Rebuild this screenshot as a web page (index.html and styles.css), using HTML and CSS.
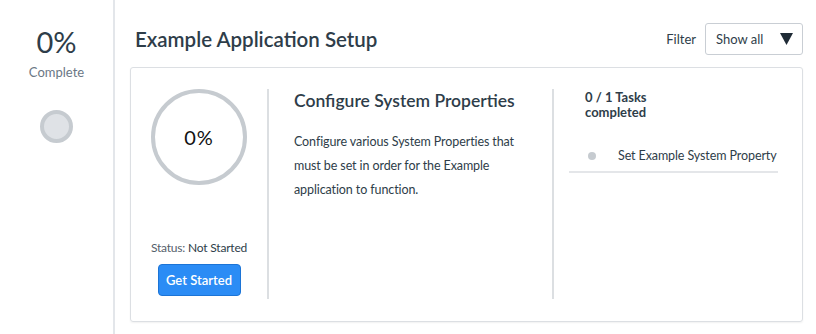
FILE: index.html
```html
<!DOCTYPE html>
<html>
<head>
<meta charset="utf-8">
<link rel="stylesheet" href="styles.css">
</head>
<body>
<div class="page">
  <aside class="sidebar">
    <div class="pct">0%</div>
    <div class="pct-label">Complete</div>
    <div class="dot-big"></div>
  </aside>
  <main class="main">
    <header class="top">
      <h1 class="title">Example Application Setup</h1>
      <div class="filter">
        <span class="filter-label">Filter</span>
        <div class="select"><span>Show all</span><svg class="caret" width="13" height="12" viewBox="0 0 13 12"><path d="M0 0H13L6.5 12Z" fill="#1f2b36"/></svg></div>
      </div>
    </header>
    <section class="card">
      <div class="col col-progress">
        <div class="ring">0%</div>
        <div class="status">Status: <span class="status-val">Not Started</span></div>
        <button class="btn">Get Started</button>
      </div>
      <div class="col col-desc">
        <h2 class="card-title">Configure System Properties</h2>
        <p class="desc">Configure various System Properties that must be set in order for the Example application to function.</p>
      </div>
      <div class="col col-tasks">
        <div class="tasks-head">0 / 1 Tasks<br>completed</div>
        <div class="task"><span class="task-dot"></span><span class="task-name">Set Example System Property</span></div>
      </div>
    </section>
  </main>
</div>
</body>
</html>
```
FILE: styles.css
```css
* { box-sizing: border-box; }
html, body { margin: 0; padding: 0; background: #fff; }
body {
  font-family: "Lato", "Open Sans", sans-serif;
  color: #2e3d49;
  width: 816px;
  height: 334px;
  overflow: hidden;
}
.page { display: flex; height: 334px; }
.sidebar {
  width: 115px;
  flex: none;
  border-right: 2px solid #e3e6ea;
  display: flex;
  flex-direction: column;
  align-items: center;
  padding-top: 25px;
}
.pct { font-size: 29px; line-height: 34px; color: #2e3d49; }
.pct-label { font-size: 13px; color: #6b7785; margin-top: 5px; }
.dot-big {
  width: 33px; height: 33px; border-radius: 50%;
  background: #dfe2e6; border: 4px solid #c6cbd0;
  margin-top: 30px;
}
.main { flex: 1; padding: 0 13px 0 15px; display: flex; flex-direction: column; }
.top {
  display: flex; align-items: center; justify-content: space-between;
  height: 67px; padding-bottom: 2px; padding-top: 12px;
}
.title { margin: 0 0 0 5px; font-size: 20.5px; font-weight: 600; color: #2e3d49; }
.filter { display: flex; align-items: center; gap: 9px; }
.filter-label { font-size: 13px; color: #2e3d49; }
.select {
  width: 98px; height: 32px;
  border: 1px solid #c9ced4; border-radius: 3px;
  display: flex; align-items: center; justify-content: space-between;
  padding: 0 9px 0 10px; font-size: 13px;
}
.caret { display: block; }
.card {
  border: 1px solid #dcdfe3;
  border-radius: 3px;
  box-shadow: 0 1px 2px rgba(0,0,0,0.06);
  display: flex;
  padding: 21px 0 22px;
  height: 255px;
}
.col { display: flex; flex-direction: column; }
.col-progress {
  width: 138px; align-items: center;
  border-right: 2px solid #dcdfe2;
}
.ring {
  width: 96px; height: 96px; border-radius: 50%;
  border: 4px solid #c6cbd0;
  display: flex; align-items: center; justify-content: center;
  font-size: 20px; color: #111; letter-spacing: 1px;
}
.status { margin-top: 55px; font-size: 12px; color: #55606b; letter-spacing: -0.2px; }
.status-val { color: #2e3d49; }
.btn {
  margin-top: 9px;
  width: 83px; height: 32px;
  background: #2b8cf5; border: 1px solid #1c74d6; border-radius: 4px;
  color: #fff; font-family: inherit; font-size: 13px; font-weight: 600;
}
.col-desc {
  width: 285px; padding: 0 25px;
  border-right: 2px solid #dcdfe2;
}
.card-title { margin: 1px 0 0; font-size: 17.5px; font-weight: 600; color: #2e3d49; }
.desc { margin: 19px 0 0; font-size: 12.5px; letter-spacing: -0.1px; line-height: 24px; color: #2e3d49; }
.col-tasks { flex: 1; padding: 0 24px 0 15px; }
.tasks-head { padding-left: 16px; font-size: 13px; font-weight: 700; line-height: 15px; margin-top: 1px; }
.task {
  display: flex; align-items: center;
  margin-top: 28px; padding: 0 0 8px 19px;
  border-bottom: 2px solid #e4e6e9;
}
.task-dot { width: 8px; height: 8px; border-radius: 50%; background: #c6cbd0; flex: none; }
.task-name { margin-left: 22px; font-size: 12.5px; letter-spacing: -0.1px; white-space: nowrap; color: #2e3d49; }
```
